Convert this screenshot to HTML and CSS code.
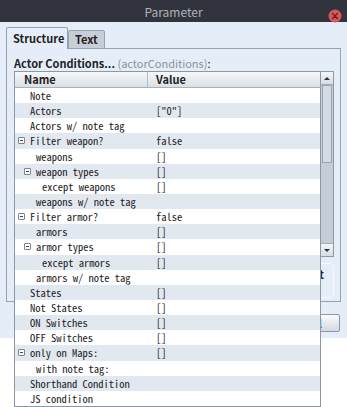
FILE: index.html
```html
<!DOCTYPE html>
<html>
<head>
    <title>Parameter</title>
    <meta charset="UTF-8">
    <link rel="stylesheet" href="styles.css">
</head>
<body>
    <div class="window">
        <div class="titlebar">
            <span></span>
            <span class="title">Parameter</span>
            <span class="close">
                <svg width="14" height="14" viewBox="0 0 14 14">
                    <circle cx="7" cy="7" r="6.5" fill="#d9585c"/>
                    <path d="M4.6 4.6 L9.4 9.4 M9.4 4.6 L4.6 9.4" stroke="#6e2024" stroke-width="1.4" stroke-linecap="round"/>
                </svg>
            </span>
        </div>

        <div class="body">
            <div class="tabs">
                <div class="tab active">Structure</div>
                <div class="tab">Text</div>
            </div>

            <div class="panel">
                <div class="caption"><b>Actor Conditions...</b> <span class="key">(actorConditions)</span>:</div>

                <div class="grid">
                    <div class="grid-main">
                        <div class="grid-head">
                            <div class="col-name">Name</div>
                            <div class="col-value">Value</div>
                        </div>
                        <div class="grid-rows">
                            <div class="row"><div class="cell-name lvl0"><span class="tog"></span>Note</div><div class="cell-value"></div></div>
                            <div class="row"><div class="cell-name lvl0"><span class="tog"></span>Actors</div><div class="cell-value">["0"]</div></div>
                            <div class="row"><div class="cell-name lvl0"><span class="tog"></span>Actors w/ note tag</div><div class="cell-value"></div></div>
                            <div class="row"><div class="cell-name lvl0"><span class="tog open"></span>Filter weapon?</div><div class="cell-value">false</div></div>
                            <div class="row"><div class="cell-name lvl1"><span class="tog"></span>weapons</div><div class="cell-value">[]</div></div>
                            <div class="row"><div class="cell-name lvl1"><span class="tog open"></span>weapon types</div><div class="cell-value">[]</div></div>
                            <div class="row"><div class="cell-name lvl2"><span class="tog"></span>except weapons</div><div class="cell-value">[]</div></div>
                            <div class="row"><div class="cell-name lvl1"><span class="tog"></span>weapons w/ note tag</div><div class="cell-value"></div></div>
                            <div class="row"><div class="cell-name lvl0"><span class="tog open"></span>Filter armor?</div><div class="cell-value">false</div></div>
                            <div class="row"><div class="cell-name lvl1"><span class="tog"></span>armors</div><div class="cell-value">[]</div></div>
                            <div class="row"><div class="cell-name lvl1"><span class="tog open"></span>armor types</div><div class="cell-value">[]</div></div>
                            <div class="row"><div class="cell-name lvl2"><span class="tog"></span>except armors</div><div class="cell-value">[]</div></div>
                            <div class="row"><div class="cell-name lvl1"><span class="tog"></span>armors w/ note tag</div><div class="cell-value"></div></div>
                            <div class="row"><div class="cell-name lvl0"><span class="tog"></span>States</div><div class="cell-value">[]</div></div>
                            <div class="row"><div class="cell-name lvl0"><span class="tog"></span>Not States</div><div class="cell-value">[]</div></div>
                            <div class="row"><div class="cell-name lvl0"><span class="tog"></span>ON Switches</div><div class="cell-value">[]</div></div>
                            <div class="row"><div class="cell-name lvl0"><span class="tog"></span>OFF Switches</div><div class="cell-value">[]</div></div>
                            <div class="row"><div class="cell-name lvl0"><span class="tog open"></span>only on Maps:</div><div class="cell-value">[]</div></div>
                            <div class="row"><div class="cell-name lvl1"><span class="tog"></span>with note tag:</div><div class="cell-value"></div></div>
                            <div class="row"><div class="cell-name lvl0"><span class="tog"></span>Shorthand Condition</div><div class="cell-value"></div></div>
                            <div class="row"><div class="cell-name lvl0"><span class="tog"></span>JS condition</div><div class="cell-value"></div></div>
                        </div>
                    </div>
                    <div class="scrollbar">
                        <div class="sb-btn up"></div>
                        <div class="sb-thumb"></div>
                        <div class="sb-track"></div>
                        <div class="sb-btn down"></div>
                    </div>
                </div>

                <div class="group"><span>Default</span></div>
            </div>

            <div class="buttons">
                <button class="btn">Cancel</button>
            </div>
        </div>
    </div>
</body>
</html>
```

FILE: styles.css
```css
body {
    margin: 0;
    width: 347px;
    height: 407px;
    overflow: hidden;
    background: #fff;
    font-family: "Noto Sans CJK JP", "Noto Sans", sans-serif;
    color: #222;
}
.window {
    height: 338px;
    background: #e5edf8;
}
.titlebar {
    height: 22px;
    background: #31343c;
    display: grid;
    grid-template-columns: 1fr auto 1fr;
    align-items: center;
}
.title {
    color: #aeb2ba;
    font-size: 12px;
}
.close {
    justify-self: end;
    margin-right: 5px;
    height: 14px;
}
.body {
    padding: 5px 6px 0;
}
.tabs {
    display: flex;
    align-items: flex-end;
    height: 22px;
    margin-bottom: -1px;
    font-size: 11px;
    font-weight: bold;
}
.tab {
    box-sizing: border-box;
    border: 1px solid #98a2ad;
    height: 19px;
    line-height: 17px;
    padding: 0 6px;
    background: #c8ced6;
    border-radius: 2px 2px 0 0;
}
.tab.active {
    position: relative;
    z-index: 1;
    height: 22px;
    line-height: 20px;
    width: 62px;
    border-bottom: none;
    background: #e5edf8;
}
.panel {
    box-sizing: border-box;
    height: 254px;
    border: 1px solid #98a2ad;
    padding: 6px 6px 0 7px;
}
.caption {
    height: 16px;
    line-height: 16px;
    font-size: 11px;
    white-space: nowrap;
}
.key {
    color: #8a929c;
}
.grid {
    display: flex;
    height: 186px;
}
.grid-main {
    width: 307px;
}
.grid-head {
    box-sizing: border-box;
    height: 17px;
    border: 1px solid #8e98a4;
    border-bottom-color: #a9b1bb;
    background: linear-gradient(#f6f8fa, #dbe0e6);
    display: flex;
    font-size: 11px;
    font-weight: bold;
    line-height: 15px;
}
.col-name {
    box-sizing: border-box;
    width: 133px;
    padding-left: 9px;
    border-right: 1px solid #b3bbc5;
}
.col-value {
    padding-left: 8px;
}
.grid-rows {
    position: relative;
    z-index: 2;
    border: 1px solid #8e98a4;
    border-top: none;
    background: #fff;
    font-family: "Noto Sans Mono CJK JP", "DejaVu Sans Mono", monospace;
    font-size: 10.5px;
}
.row {
    display: flex;
    height: 15.15px;
    line-height: 15px;
    white-space: nowrap;
}
.row:nth-child(even) {
    background: #e2e8f0;
}
.cell-name {
    box-sizing: border-box;
    width: 133px;
    display: flex;
    align-items: center;
}
.cell-value {
    padding-left: 8px;
}
.lvl0 { padding-left: 3px; }
.lvl1 { padding-left: 9px; }
.lvl2 { padding-left: 15px; }
.tog {
    width: 12px;
    height: 15px;
    display: flex;
    align-items: center;
    flex: none;
}
.tog.open::before {
    content: "";
    box-sizing: border-box;
    width: 7px;
    height: 7px;
    border: 1px solid #7d848d;
    border-radius: 1px;
    background: linear-gradient(#444, #444) center / 3px 1px no-repeat, #fff;
}
.scrollbar {
    box-sizing: border-box;
    width: 13px;
    height: 186px;
    border: 1px solid #8e98a4;
    border-left: none;
    background: #c4ccd6;
    display: flex;
    flex-direction: column;
}
.sb-btn {
    height: 12px;
    background: linear-gradient(#f4f6f9, #d6dce3);
    border-bottom: 1px solid #a3adb8;
    display: flex;
    align-items: center;
    justify-content: center;
}
.sb-btn.down {
    border-bottom: none;
    border-top: 1px solid #a3adb8;
}
.sb-btn::before {
    content: "";
    border-left: 3px solid transparent;
    border-right: 3px solid transparent;
}
.sb-btn.up::before {
    border-bottom: 3px solid #333;
}
.sb-btn.down::before {
    border-top: 3px solid #333;
}
.sb-thumb {
    box-sizing: border-box;
    height: 78px;
    margin: 0 1px;
    border: 1px solid #9aa5b1;
    background: #d4dbe3;
}
.sb-track {
    flex: 1;
}
.group {
    box-sizing: border-box;
    margin-top: 6px;
    height: 35px;
    border: 1px solid #f7f9fc;
    border-radius: 4px;
    padding: 2px 9px 0 0;
    text-align: right;
    font-size: 11px;
    font-weight: bold;
    line-height: 16px;
}
.buttons {
    display: flex;
    justify-content: flex-end;
    margin-top: 12px;
}
.btn {
    box-sizing: border-box;
    height: 18px;
    margin: 0 1px 0 0;
    padding: 0 17px 0 20px;
    border: 1px solid #8e98a4;
    border-radius: 2px;
    background: linear-gradient(#fbfcfd, #d3d9e0);
    font-family: "Noto Sans CJK JP", "Noto Sans", sans-serif;
    font-size: 11px;
    font-weight: bold;
    color: #203c84;
    line-height: 16px;
}
```
